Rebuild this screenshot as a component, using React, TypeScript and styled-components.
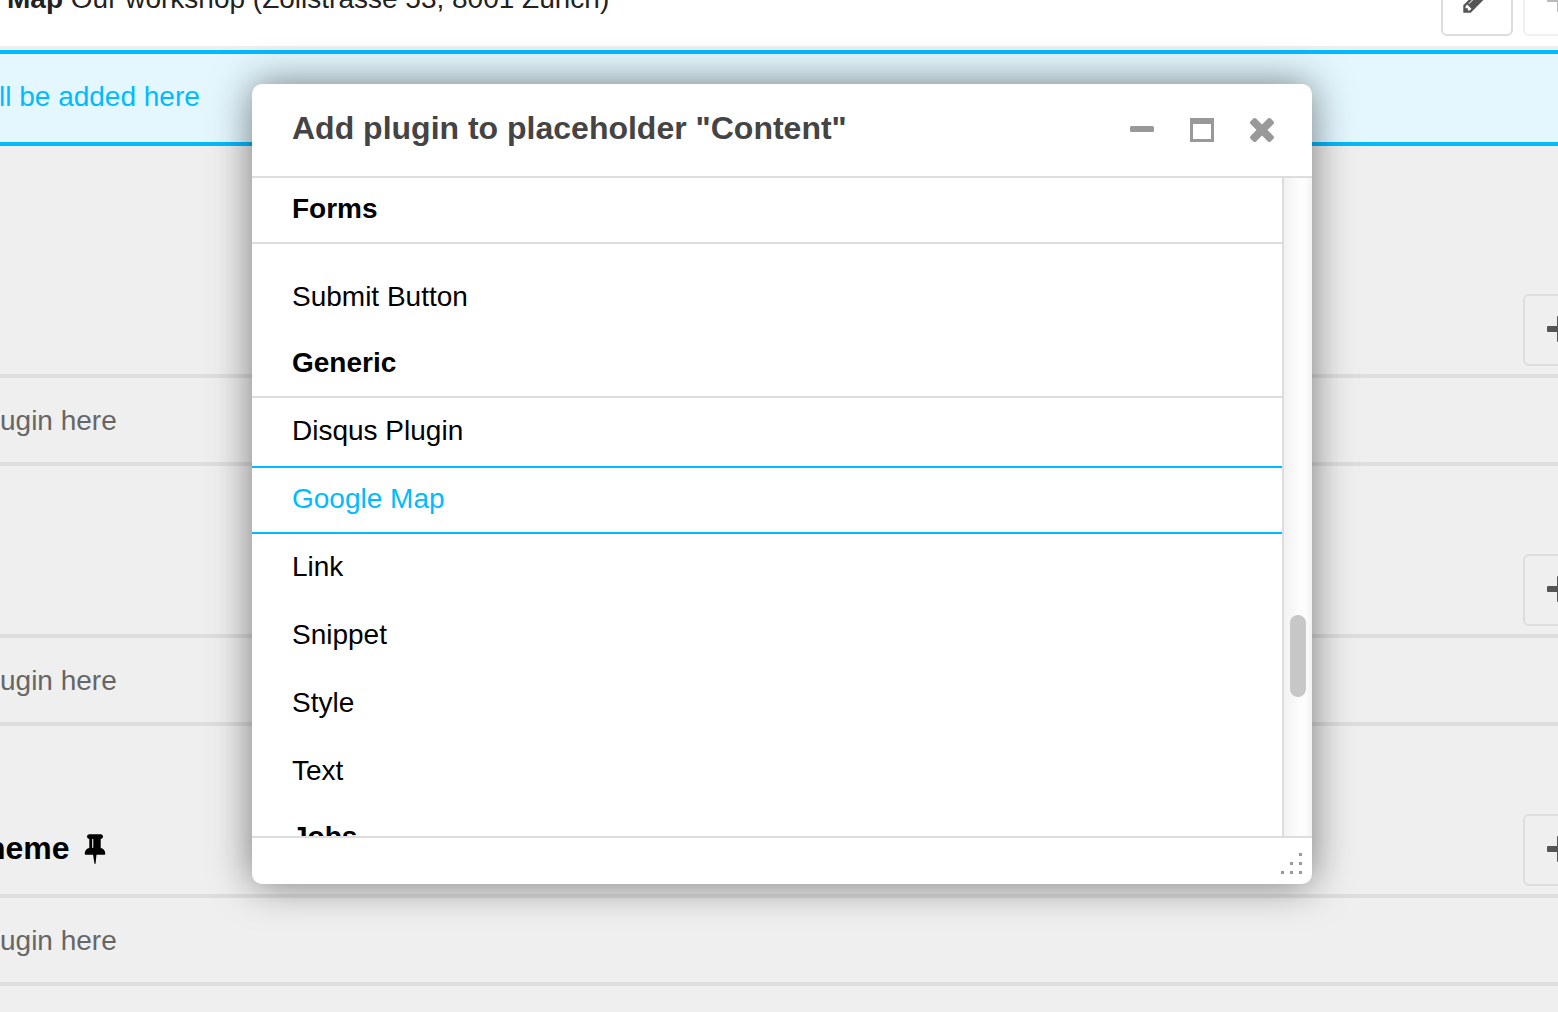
import React from "react";
import styled, { createGlobalStyle } from "styled-components";

const GlobalStyle = createGlobalStyle`
  * { box-sizing: border-box; }
  body {
    margin: 0;
    background: #efefef;
    font-family: "Liberation Sans", Arial, Helvetica, sans-serif;
    font-size: 28px;
    line-height: 32px;
    color: #222;
  }
`;

const Page = styled.main`
  position: relative;
  height: 100vh;
  overflow: hidden;
  background: #efefef;
`;

/* The board is scrolled: its edges lie outside the viewport. */
const Board = styled.div`
  margin: -46px -47px 0 -14px;
`;

const PluginRow = styled.div`
  display: flex;
  align-items: center;
  gap: 10px;
  padding: 10px 10px 10px 21px;
  margin-bottom: 4px;
  background: #fff;
`;

const PluginLabel = styled.div`
  flex: 1;
  padding-bottom: 2px;
  white-space: nowrap;
`;

const DropTarget = styled.div`
  padding: 27px 13px 29px;
  border: solid #00bbff;
  border-width: 4px 0;
  background: #e4f7ff;
  color: #00bbff;
`;

const AreaHeader = styled.header<{ $tall?: boolean }>`
  display: flex;
  align-items: flex-end;
  justify-content: space-between;
  height: ${(p) => (p.$tall ? 232 : 172)}px;
  padding: 0 10px 8px 0;
  border-bottom: 4px solid #ddd;
`;

const AreaTitle = styled.h2`
  display: flex;
  align-items: center;
  gap: 9px;
  height: 72px;
  margin: 0;
  padding-bottom: 5px;
  font-size: 32px;
  line-height: 40px;
  color: #000;
`;

const EmptyRow = styled.div`
  padding: 27px 14px 25px;
  border-bottom: 4px solid #ddd;
  color: #666;
`;

const BoardButton = styled.button<{ $filled?: boolean }>`
  display: flex;
  align-items: center;
  justify-content: center;
  flex: none;
  width: 72px;
  height: 72px;
  padding: 0 0 2px;
  border: 2px solid #ddd;
  border-radius: 6px;
  background: ${(p) => (p.$filled ? "#fff" : "transparent")};
  color: #555;

  &:disabled {
    opacity: 0.4;
  }
`;

const Dialog = styled.section`
  position: absolute;
  top: 84px;
  left: 252px;
  display: flex;
  flex-direction: column;
  width: 1060px;
  height: 800px;
  overflow: hidden;
  border-radius: 10px;
  background: #fff;
  box-shadow: 0 0 40px rgba(0, 0, 0, 0.5);
`;

const DialogHeader = styled.header`
  display: flex;
  align-items: center;
  justify-content: space-between;
  height: 94px;
  padding: 0 38px 0 40px;
  border-bottom: 2px solid #ddd;
`;

const DialogTitle = styled.h1`
  margin: 0;
  padding-bottom: 4px;
  font-size: 32px;
  line-height: 40px;
  color: #444;
`;

const Controls = styled.div`
  display: flex;
  gap: 36px;
`;

const ControlButton = styled.button`
  display: flex;
  align-items: center;
  justify-content: center;
  width: 24px;
  height: 24px;
  padding: 0;
  border: 0;
  background: none;
  color: #999;
`;

const DialogBody = styled.div`
  display: flex;
  flex: 1;
  min-height: 0;
`;

const PluginList = styled.div`
  flex: 1;
  overflow: hidden;
  color: #000;
`;

const GroupTitle = styled.h3`
  margin: 0;
  padding: 15px 40px 17px;
  border-bottom: 2px solid #ddd;
  font-size: 28px;
  line-height: 32px;
`;

const Group = styled.div<{ $spaced?: boolean }>`
  padding-top: ${(p) => (p.$spaced ? 20 : 0)}px;
`;

const PluginLink = styled.a<{ $active?: boolean }>`
  display: block;
  padding: 15px 40px 17px;
  border: solid ${(p) => (p.$active ? "#00bbff" : "transparent")};
  border-width: 2px 0;
  color: ${(p) => (p.$active ? "#00bbff" : "#000")};
  text-decoration: none;
`;

const ScrollTrack = styled.div`
  display: flex;
  flex-direction: column;
  align-items: center;
  width: 30px;
  padding-top: 437px;
  border-left: 2px solid #ddd;
  background: linear-gradient(to right, #f2f2f2, #fdfdfd 60%, #fdfdfd 75%, #f2f2f2);
`;

const ScrollThumb = styled.div`
  width: 16px;
  height: 82px;
  border-radius: 8px;
  background: #c7c7c7;
`;

const DialogFooter = styled.footer`
  display: flex;
  align-items: flex-end;
  justify-content: flex-end;
  height: 48px;
  padding: 0 10px 10px;
  border-top: 2px solid #ddd;
  color: #999;
`;

const PlusIcon = () => (
  <svg width="28" height="26" viewBox="-2 0 28 26" fill="currentColor" aria-hidden="true">
    <rect x="0" y="10" width="26" height="6" rx="1" />
    <rect x="10" y="0" width="6" height="26" rx="1" />
  </svg>
);

const PencilIcon = () => (
  <svg width="32" height="32" viewBox="0 0 1792 1792" fill="currentColor" aria-hidden="true">
    <path d="M491 1536l91-91-235-235-91 91v107h128v128h107zm523-928q0-22-22-22-10 0-17 7l-542 542q-7 7-7 17 0 22 22 22 10 0 17-7l542-542q7-7 7-17zm-54-192l416 416-832 832h-416v-416zm683 96q0 53-37 90l-166 166-416-416 166-165q36-38 90-38 53 0 91 38l235 234q37 39 37 91z" />
  </svg>
);

const PinIcon = () => (
  <svg width="32" height="32" viewBox="0 0 1792 1792" fill="currentColor" aria-hidden="true">
    <path d="M800 864v-448q0-14-9-23t-23-9-23 9-9 23v448q0 14 9 23t23 9 23-9 9-23zm672 352q0 26-19 45t-45 19h-429l-51 483q-2 12-10.500 20.500t-20.500 8.500h-1q-27 0-32-27l-76-485h-404q-26 0-45-19t-19-45q0-123 78.500-221.500t177.500-98.500v-512q-52 0-90-38t-38-90 38-90 90-38h640q52 0 90 38t38 90-38 90-90 38v512q99 0 177.500 98.500t78.500 221.500z" />
  </svg>
);

const MinimizeIcon = () => (
  <svg width="24" height="24" viewBox="0 0 24 24" fill="currentColor" aria-hidden="true">
    <rect x="0" y="8" width="24" height="6" rx="1.5" />
  </svg>
);

const MaximizeIcon = () => (
  <svg width="24" height="24" viewBox="0 0 24 24" fill="currentColor" aria-hidden="true">
    <path fillRule="evenodd" d="M0 0h24v24H0zM3 6v15h18V6z" />
  </svg>
);

const CloseIcon = () => (
  <svg width="24" height="24" viewBox="302 366 1188 1188" fill="currentColor" aria-hidden="true">
    <path d="M1490 1322q0 40-28 68l-136 136q-28 28-68 28t-68-28l-294-294-294 294q-28 28-68 28t-68-28l-136-136q-28-28-28-68t28-68l294-294-294-294q-28-28-28-68t28-68l136-136q28-28 68-28t68 28l294 294 294-294q28-28 68-28t68 28l136 136q28 28 28 68t-28 68l-294 294 294 294q28 28 28 68z" />
  </svg>
);

const ResizeGrip = () => (
  <svg width="21" height="21" viewBox="0 0 21 21" fill="currentColor" aria-hidden="true">
    <path d="M18 0h3v3h-3zM9 9h3v3H9zM18 9h3v3h-3zM0 18h3v3H0zM9 18h3v3H9zM18 18h3v3h-3z" />
  </svg>
);

const groups = [
  { title: "Forms", spaced: true, plugins: ["Submit Button"] },
  { title: "Generic", plugins: ["Disqus Plugin", "Google Map", "Link", "Snippet", "Style", "Text"] },
  { title: "Jobs", plugins: [] },
];

const areas = [{ tall: true }, {}, { title: "heme" }] as { tall?: boolean; title?: string }[];

export default function App() {
  const active = "Google Map";
  return (
    <Page>
      <GlobalStyle />
      <Board>
        <PluginRow>
          <PluginLabel>
            <strong>Map</strong> Our workshop (Zollstrasse 53, 8001 Zürich)
          </PluginLabel>
          <BoardButton $filled aria-label="Edit">
            <PencilIcon />
          </BoardButton>
          <BoardButton $filled disabled aria-label="Add plugin">
            <PlusIcon />
          </BoardButton>
        </PluginRow>
        <DropTarget>ll be added here</DropTarget>
        {areas.map((area, i) => (
          <section key={i}>
            <AreaHeader $tall={area.tall}>
              <AreaTitle>
                {area.title}
                {area.title && <PinIcon />}
              </AreaTitle>
              <BoardButton aria-label="Add plugin">
                <PlusIcon />
              </BoardButton>
            </AreaHeader>
            <EmptyRow>ugin here</EmptyRow>
          </section>
        ))}
      </Board>

      <Dialog role="dialog" aria-labelledby="dialog-title">
        <DialogHeader>
          <DialogTitle id="dialog-title">Add plugin to placeholder "Content"</DialogTitle>
          <Controls>
            <ControlButton aria-label="Minimize">
              <MinimizeIcon />
            </ControlButton>
            <ControlButton aria-label="Maximize">
              <MaximizeIcon />
            </ControlButton>
            <ControlButton aria-label="Close">
              <CloseIcon />
            </ControlButton>
          </Controls>
        </DialogHeader>
        <DialogBody>
          <PluginList>
            {groups.map((group) => (
              <section key={group.title}>
                <GroupTitle>{group.title}</GroupTitle>
                <Group $spaced={group.spaced}>
                  {group.plugins.map((name) => (
                    <PluginLink key={name} href="#" $active={name === active}>
                      {name}
                    </PluginLink>
                  ))}
                </Group>
              </section>
            ))}
          </PluginList>
          <ScrollTrack>
            <ScrollThumb />
          </ScrollTrack>
        </DialogBody>
        <DialogFooter>
          <ResizeGrip />
        </DialogFooter>
      </Dialog>
    </Page>
  );
}
